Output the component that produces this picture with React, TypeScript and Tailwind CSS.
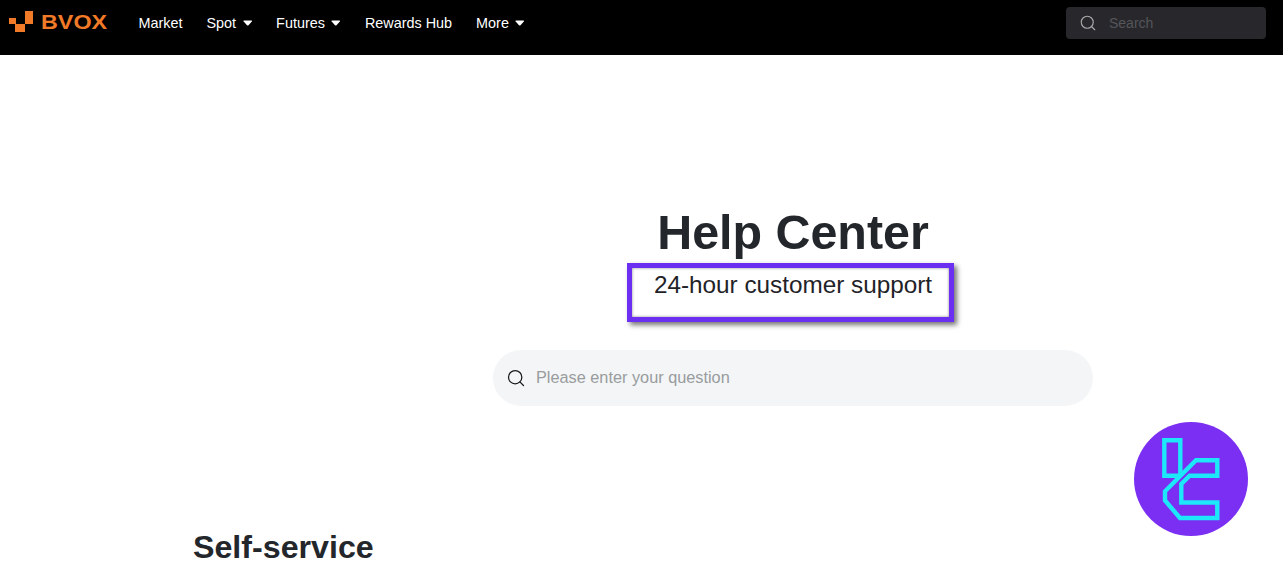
import { Search } from "lucide-react";

const nav = [
  { label: "Market", caret: false },
  { label: "Spot", caret: true },
  { label: "Futures", caret: true },
  { label: "Rewards Hub", caret: false },
  { label: "More", caret: true },
];

function Caret() {
  return (
    <svg width="9.5" height="6.5" viewBox="0 0 10 7" className="ml-[6.5px]">
      <path d="M1 0.5 H9 Q10 0.5 9.4 1.6 L5.8 5.6 Q5 6.4 4.2 5.6 L0.6 1.6 Q0 0.5 1 0.5 Z" fill="#fff" />
    </svg>
  );
}

function BvoxMark() {
  return (
    <svg width="24" height="21" viewBox="0 0 24 21" className="shrink-0">
      <rect x="0" y="7" width="7" height="6" fill="#f07a28" />
      <rect x="6" y="13" width="10" height="8" fill="#f07a28" />
      <rect x="16" y="0" width="8" height="13" fill="#f07a28" />
    </svg>
  );
}

function TcBadge() {
  return (
    <div className="absolute right-[35px] bottom-[35px] h-[114px] w-[114px] rounded-full bg-[#7b2ff2]">
      <svg width="114" height="114" viewBox="0 0 114 114" fill="none" stroke="#1ce8fa" strokeWidth="4.4">
        <path d="M46.3 53 V18.3 H30.3 V53.7 H46" />
        <path d="M62 38.3 H83.3 V53.7 H55.6 L47.3 62 V80.5 H83.3 V96 H46 L31 78.5 V69.3 Z" />
      </svg>
    </div>
  );
}

export default function App() {
  return (
    <div className="relative h-[571px] w-full overflow-hidden bg-white font-['Liberation_Sans',Arial,sans-serif]">
      <header className="flex h-[55px] items-start bg-black pl-[9px] pr-[17px]">
        <div className="flex h-[43px] items-center">
          <BvoxMark />
          <span className="ml-[8px] origin-left scale-x-[1.11] text-[21px] font-bold text-[#f07a28]">BVOX</span>
        </div>
        <nav className="ml-[38px] flex h-[47px] items-center gap-[24px] text-[14.4px] text-white">
          {nav.map((n) => (
            <a key={n.label} className="flex items-center">
              {n.label}
              {n.caret && <Caret />}
            </a>
          ))}
        </nav>
        <div className="ml-auto mt-[7px] flex h-[32px] w-[200px] items-center rounded-[4px] bg-[#28282c] pl-[13px]">
          <Search size={18} strokeWidth={1.5} className="text-[#aaaaaa]" />
          <span className="ml-[12px] text-[14px] text-[#55555a]">Search</span>
        </div>
      </header>

      <main className="flex flex-col items-center pl-[303px]">
        <h1 className="mt-[149px] text-[48.4px] leading-[56px] font-bold text-[#23272b]">Help Center</h1>
        <div className="ml-[-5px] mt-[3px] flex h-[59px] w-[327px] justify-center border-[5px] border-[#6a2ff0] shadow-[3px_3px_5px_rgba(0,0,0,0.55),inset_0_0_3px_rgba(0,0,0,0.45)]">
          <span className="ml-[5px] text-[24.3px] leading-[34px] text-[#1f2328]">24-hour customer support</span>
        </div>
        <div className="mt-[28px] flex h-[56px] w-[600px] items-center rounded-[28px] bg-[#f3f5f6] pl-[13px]">
          <Search size={20} strokeWidth={1.5} className="text-[#1a1a1a]" />
          <span className="ml-[10px] pb-[2px] text-[16.3px] text-[#999c9e]">Please enter your question</span>
        </div>
      </main>

      <h2 className="mt-[121px] ml-[193px] text-[32.2px] leading-[40px] font-bold text-[#23272b]">Self-service</h2>

      <TcBadge />
    </div>
  );
}
